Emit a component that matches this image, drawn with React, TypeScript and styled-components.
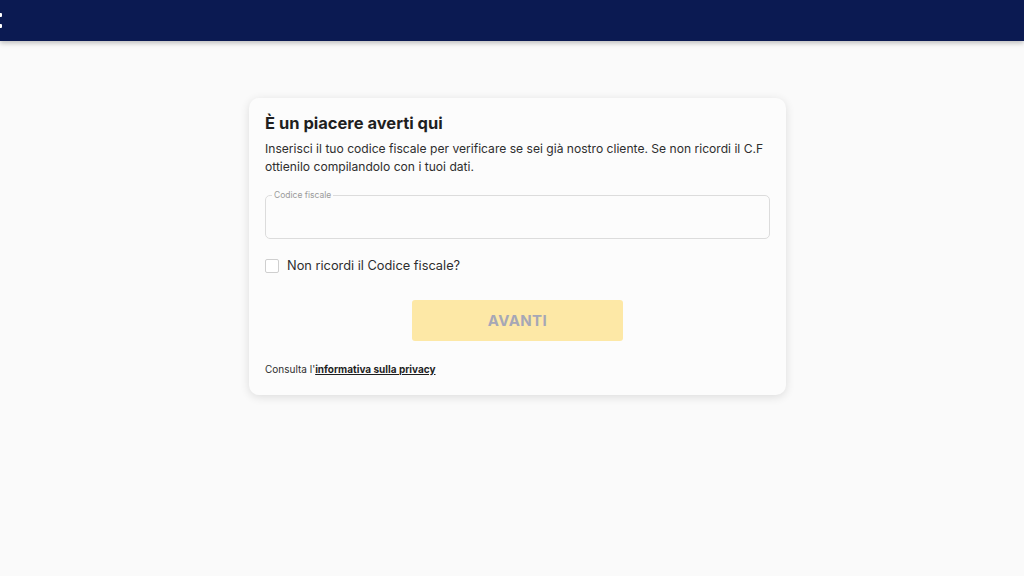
import React, { useState } from 'react';
import styled, { createGlobalStyle } from 'styled-components';

const GlobalStyle = createGlobalStyle`
  html, body {
    margin: 0;
    padding: 0;
    background-color: #FAFAFA;
    font-family: Inter, "Noto Sans", "Liberation Sans", sans-serif;
  }
  * {
    box-sizing: border-box;
  }
`;

const Page = styled.div`
  width: 100%;
  min-height: 576px;
  background-color: #FAFAFA;
  overflow: hidden;
`;

const Header = styled.header`
  height: 41px;
  background-color: #0B1A52;
  box-shadow: 0 2px 5px rgba(0, 0, 0, 0.25);
  display: flex;
  align-items: center;
  position: relative;
  z-index: 2;
`;

const MenuStub = styled.div`
  display: flex;
  flex-direction: column;
  gap: 7px;
  margin-left: -2px;
`;

const MenuBar = styled.span`
  display: block;
  width: 4px;
  height: 4px;
  border-radius: 1px;
  background-color: #FFFFFF;
`;

const Main = styled.main`
  display: flex;
  justify-content: center;
  padding: 57px 0 0 11px;
`;

const Card = styled.section`
  width: 537px;
  background-color: #FCFCFC;
  border-radius: 10px;
  box-shadow: 0 2px 10px rgba(0, 0, 0, 0.12);
  padding: 14px 16px 20px;
  display: flex;
  flex-direction: column;
`;

const Title = styled.h1`
  margin: 0;
  font-size: 16.5px;
  font-weight: 700;
  color: #1F1F1F;
  line-height: 22px;
`;

const Intro = styled.p`
  margin: 6px 0 0;
  font-size: 12.1px;
  line-height: 18px;
  color: #2E2E2E;
`;

const Field = styled.fieldset`
  margin: 14px 0 0;
  height: 49px;
  border: 1px solid #DCDCDC;
  border-radius: 5px;
  padding: 0 6px;
`;

const Legend = styled.legend`
  font-size: 8.5px;
  color: #9A9A9A;
  padding: 0 2px;
  line-height: 10px;
`;

const Input = styled.input`
  width: 100%;
  border: none;
  outline: none;
  background: transparent;
  font-size: 13px;
  font-family: inherit;
  padding: 4px 2px;
`;

const CheckRow = styled.label`
  display: flex;
  align-items: center;
  gap: 8px;
  margin-top: 19px;
  cursor: pointer;
`;

const Box = styled.span<{ checked: boolean }>`
  width: 14px;
  height: 14px;
  border: 1px solid #CFCFCF;
  border-radius: 2px;
  background-color: ${props => (props.checked ? '#0B1A52' : '#FFFFFF')};
`;

const CheckLabel = styled.span`
  font-size: 12.8px;
  color: #2E2E2E;
`;

const ButtonRow = styled.div`
  display: flex;
  justify-content: center;
  margin-top: 27px;
`;

const Button = styled.button`
  width: 211px;
  height: 41px;
  border: none;
  border-radius: 3px;
  background-color: #FDE8A6;
  color: #A6A7B6;
  font-family: inherit;
  font-size: 15px;
  font-weight: 700;
  letter-spacing: 0.4px;
  cursor: not-allowed;
`;

const Footer = styled.p`
  margin: 22px 0 0;
  font-size: 10px;
  color: #2E2E2E;
`;

const PrivacyLink = styled.a`
  color: #1F1F1F;
  font-weight: 700;
  text-decoration: underline;
`;

const App: React.FC = () => {
  const [checked, setChecked] = useState(false);

  return (
    <Page>
      <GlobalStyle />
      <Header>
        <MenuStub>
          <MenuBar />
          <MenuBar />
        </MenuStub>
      </Header>
      <Main>
        <Card>
          <Title>È un piacere averti qui</Title>
          <Intro>
            Inserisci il tuo codice fiscale per verificare se sei già nostro cliente. Se non ricordi il C.F
            ottienilo compilandolo con i tuoi dati.
          </Intro>
          <Field>
            <Legend>Codice fiscale</Legend>
            <Input type="text" />
          </Field>
          <CheckRow onClick={() => setChecked(!checked)}>
            <Box checked={checked} />
            <CheckLabel>Non ricordi il Codice fiscale?</CheckLabel>
          </CheckRow>
          <ButtonRow>
            <Button disabled>AVANTI</Button>
          </ButtonRow>
          <Footer>
            Consulta l'<PrivacyLink href="#">informativa sulla privacy</PrivacyLink>
          </Footer>
        </Card>
      </Main>
    </Page>
  );
};

export default App;
